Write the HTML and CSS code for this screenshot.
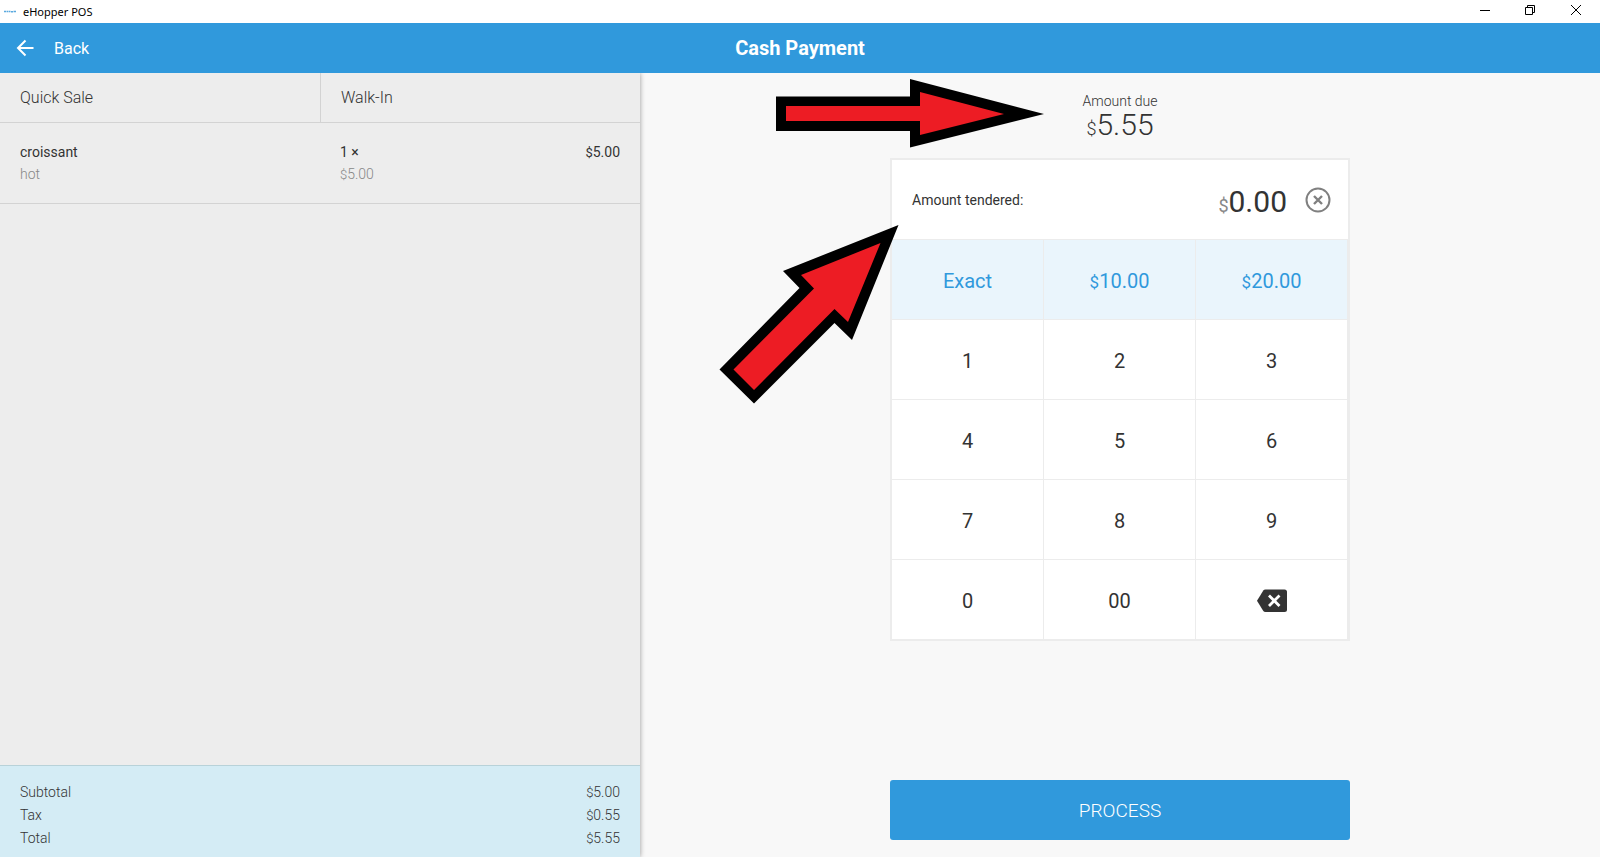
FILE: index.html
```html
<!DOCTYPE html>
<html lang="en">
<head>
<meta charset="utf-8">
<title>eHopper POS</title>
<link rel="stylesheet" href="styles.css">
</head>
<body>
<div class="titlebar">
  <svg class="app-logo" viewBox="0 0 12 4" aria-hidden="true"><path d="M0 1.500h2M2.500 1.500h2M5 1.500h1.500M7 1.800h2M9.500 1.500h2.500" stroke="#5aa9de" stroke-width="1.600" fill="none"/></svg>
  <span class="app-name">eHopper POS</span>
  <div class="window-controls">
    <button type="button" aria-label="Minimize"><svg viewBox="0 0 10 10"><path d="M0 5.500h10"/></svg></button>
    <button type="button" aria-label="Restore"><svg viewBox="0 0 10 10"><path d="M.5 2.500h7v7h-7zM2.500 2.500v-2h7v7h-2"/></svg></button>
    <button type="button" aria-label="Close"><svg viewBox="0 0 10 10"><path d="M0 0l10 10M10 0L0 10"/></svg></button>
  </div>
</div>

<header class="header">
  <button type="button" class="back">
    <svg viewBox="0 0 18 18" aria-hidden="true"><path d="M17.500 9H2.500M9.500 1.500L2 9L9.500 16.500" fill="none" stroke="#fff" stroke-width="2"/></svg>
    <span>Back</span>
  </button>
  <h1>Cash Payment</h1>
</header>

<main class="main">
  <section class="ticket">
    <div class="tabs">
      <button type="button">Quick Sale</button>
      <button type="button">Walk-In</button>
    </div>
    <div class="item">
      <div><p>croissant</p><p class="sub">hot</p></div>
      <div class="item-right">
        <div><p>1 ×</p><p class="sub"><span class="currency">$</span>5.00</p></div>
        <p><span class="currency">$</span>5.00</p>
      </div>
    </div>
    <dl class="totals">
      <div><dt>Subtotal</dt><dd><span class="currency">$</span>5.00</dd></div>
      <div><dt>Tax</dt><dd><span class="currency">$</span>0.55</dd></div>
      <div><dt>Total</dt><dd><span class="currency">$</span>5.55</dd></div>
    </dl>
  </section>

  <section class="payment">
    <div class="column">
      <div class="due">
        <p class="due-label">Amount due</p>
        <p class="amount"><span class="currency">$</span>5.55</p>
      </div>
      <div class="pad">
        <div class="tendered">
          <span class="tendered-label">Amount tendered:</span>
          <output class="amount"><span class="currency">$</span>0.00</output>
          <button type="button" class="clear" aria-label="Clear">
            <svg viewBox="0 0 26 26"><circle cx="13" cy="13" r="11.500" stroke-width="2"/><path d="M9 9l8 8M17 9l-8 8" stroke-width="2.400"/></svg>
          </button>
        </div>
        <div class="keys">
          <button type="button" class="quick">Exact</button>
          <button type="button" class="quick"><span class="currency">$</span>10.00</button>
          <button type="button" class="quick"><span class="currency">$</span>20.00</button>
          <button type="button">1</button>
          <button type="button">2</button>
          <button type="button">3</button>
          <button type="button">4</button>
          <button type="button">5</button>
          <button type="button">6</button>
          <button type="button">7</button>
          <button type="button">8</button>
          <button type="button">9</button>
          <button type="button">0</button>
          <button type="button">00</button>
          <button type="button" aria-label="Backspace">
            <svg class="backspace" viewBox="0 0 30 24"><path d="M8.500 .5H27.500Q30 .5 30 3V20.500Q30 23 27.500 23H8.500Q7 23 6.300 22L0 11.700L6.300 1.500Q7 .5 8.500 .5Z" fill="#333"/><path d="M12 6.500l10.500 10.500M22.500 6.500l-10.500 10.500" stroke="#fff" stroke-width="2.800"/></svg>
          </button>
        </div>
      </div>
      <button type="button" class="process">PROCESS</button>
      <svg class="arrows" viewBox="0 0 360 340" aria-hidden="true">
        <path fill="#000" d="M76 23.500H210V6L344 41L210 74.500V58H76ZM198.500 152L83 198L99.500 215L19.500 296.500L54 330.500L134.500 250L152 267Z"/>
        <path fill="#ed1c24" d="M86 33H220V19L304 41L220 62V48H86ZM180.500 170L101 202L114 215.500L33.500 296.500L54 317L134.500 236L148 249Z"/>
      </svg>
    </div>
  </section>
</main>
</body>
</html>
```

FILE: styles.css
```css
* { box-sizing: border-box; }

body {
  margin: 0;
  min-height: 100vh;
  display: flex;
  flex-direction: column;
  background: #f8f8f8;
  color: #333;
  font-family: Roboto, "Liberation Sans", sans-serif;
  font-size: 14px;
}

p, h1, dl, dd { margin: 0; }

button {
  margin: 0;
  padding: 0;
  border: 0;
  background: none;
  color: inherit;
  font: inherit;
  cursor: pointer;
}

svg { display: block; }

.titlebar {
  display: flex;
  align-items: center;
  height: 23px;
  padding-left: 4px;
  background: #fff;
  color: #000;
  font: 11px/22px "Noto Sans", "Open Sans", sans-serif;
}
.app-logo { width: 12px; height: 4px; margin-right: 7px; }
.window-controls { display: flex; margin-left: auto; }
.window-controls button {
  display: flex;
  justify-content: center;
  width: 46px;
  padding-bottom: 3px;
}
.window-controls button:nth-child(2) { width: 44px; }
.window-controls button:last-child { width: 48px; }
.window-controls svg {
  width: 10px;
  height: 10px;
  fill: none;
  stroke: #000;
  stroke-width: 1;
}

.header {
  display: grid;
  grid-template-columns: 1fr auto 1fr;
  align-items: center;
  height: 50px;
  background: #3099dc;
  color: #fff;
}
.header h1 { font-size: 20px; font-weight: 700; }
.back {
  display: flex;
  align-items: center;
  justify-self: start;
  gap: 20px;
  padding-left: 16px;
  font-size: 16px;
}
.back svg { width: 18px; height: 18px; }

.main { display: flex; flex: 1; }

.currency { font-size: 13px; line-height: 1; }

.ticket {
  position: relative;
  display: flex;
  flex-direction: column;
  width: 40%;
  background: #ededed;
  box-shadow: 0 0 5px rgba(0, 0, 0, 0.4);
  clip-path: inset(0 -10px 0 0);
}
.tabs {
  display: grid;
  grid-template-columns: 1fr 1fr;
  border-bottom: 1px solid #d3d3d3;
}
.tabs button {
  height: 49px;
  padding: 0 20px;
  font-size: 16px;
  font-weight: 300;
  text-align: left;
}
.tabs button + button { border-left: 1px solid #d3d3d3; }

.item {
  display: grid;
  grid-template-columns: 1fr 1fr;
  padding: 18px 20px;
  border-bottom: 1px solid #d3d3d3;
  line-height: 22px;
}
.item-right {
  display: flex;
  justify-content: space-between;
  padding-left: 20px;
}
.sub { color: #888; font-weight: 300; }

.totals {
  margin-top: auto;
  padding: 15px 20px 7px;
  border-top: 1px solid #b8d2d9;
  background: #d4ecf5;
  font-weight: 300;
  line-height: 23px;
}
.totals div { display: flex; justify-content: space-between; }

.payment { flex: 1; display: flex; justify-content: center; }
.column {
  position: relative;
  display: flex;
  flex-direction: column;
  width: 460px;
  padding: 18px 0 17px;
}
.due { height: 67px; text-align: center; }
.due-label { font-weight: 300; line-height: 20px; }
.amount { font-size: 30px; font-weight: 300; line-height: 28px; }
.amount .currency { font-size: 18px; }

.pad { border: 2px solid #ececec; background: #fff; }
.tendered {
  display: flex;
  align-items: center;
  height: 80px;
  padding: 0 17px 0 20px;
  border-bottom: 1px solid #ececec;
}
.tendered-label { margin-right: auto; }
.tendered .amount { padding-top: 4px; font-weight: 400; }
.tendered .currency { color: #888; }
.clear { margin-left: 18px; }
.clear svg { width: 26px; height: 26px; fill: none; stroke: #808080; }

.keys { display: grid; grid-template-columns: repeat(3, 1fr); }
.keys button {
  height: 80px;
  padding-top: 2px;
  border: solid #ececec;
  border-width: 0 1px 1px 0;
  font-size: 20px;
}
.keys button:nth-last-child(-n + 3) { height: 79px; border-bottom: 0; }
.keys .quick { background: #eaf5fc; color: #3099dc; }
.keys .currency { font-size: 17px; }
.backspace { width: 30px; height: 24px; margin: 0 auto; }

.process {
  height: 60px;
  margin-top: auto;
  border-radius: 3px;
  background: #3099dc;
  color: #fff;
  font-size: 19px;
  font-weight: 300;
}

.arrows {
  position: absolute;
  top: 0;
  left: -190px;
  width: 360px;
  height: 340px;
  pointer-events: none;
}
```
